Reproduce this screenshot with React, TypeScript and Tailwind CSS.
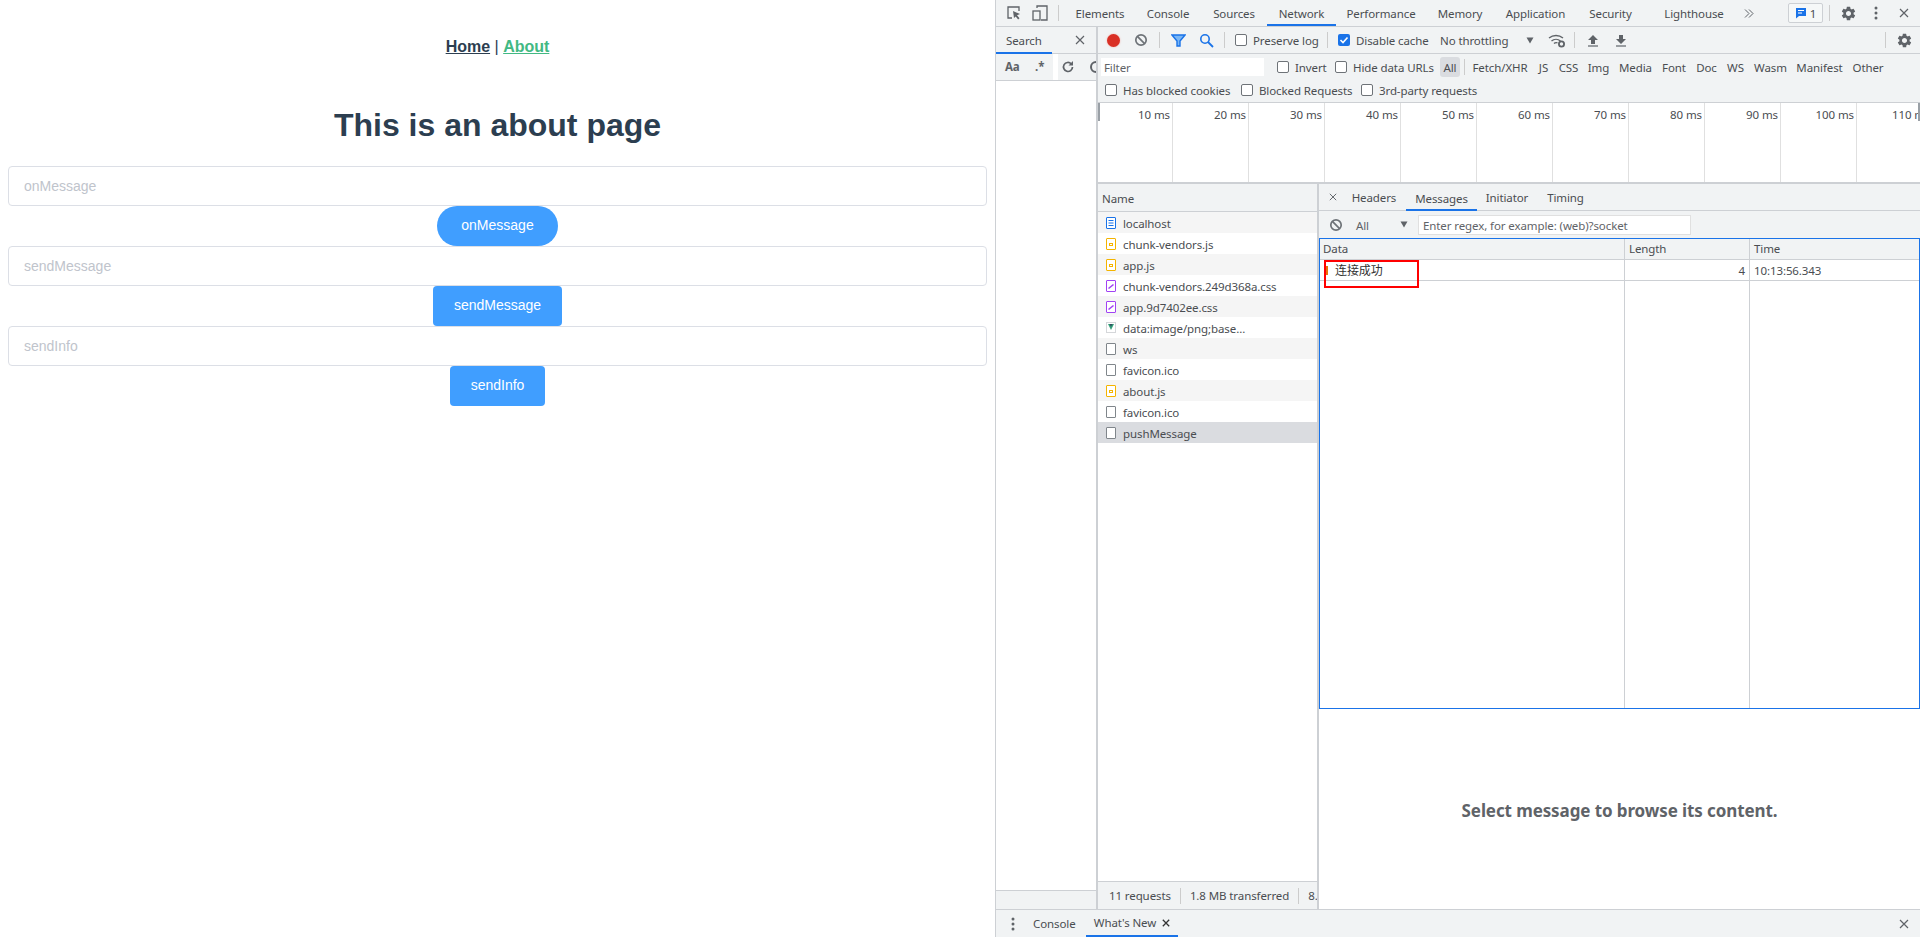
import { MdSettings } from "react-icons/md";

const mainTabs = [
  { label: "Elements", w: "w-[70px]" },
  { label: "Console", w: "w-[66px]" },
  { label: "Sources", w: "w-[66px]" },
  { label: "Network", w: "w-[69px]" },
  { label: "Performance", w: "w-[90px]" },
  { label: "Memory", w: "w-[68px]" },
  { label: "Application", w: "w-[83px]" },
  { label: "Security", w: "w-[67px]" },
  { label: "Lighthouse", w: "w-[100px]" },
];

const typeFilters = [
  { label: "Fetch/XHR", w: "w-[66px]" },
  { label: "JS", w: "w-[21px]" },
  { label: "CSS", w: "w-[29px]" },
  { label: "Img", w: "w-[31px]" },
  { label: "Media", w: "w-[43px]" },
  { label: "Font", w: "w-[34px]" },
  { label: "Doc", w: "w-[31px]" },
  { label: "WS", w: "w-[27px]" },
  { label: "Wasm", w: "w-[43px]" },
  { label: "Manifest", w: "w-[55px]" },
  { label: "Other", w: "w-[42px]" },
];

const detailTabs = [
  { label: "Headers", w: "w-[64px] pt-[2px]" },
  { label: "Messages", w: "w-[71px] pt-[4px] border-b-2 border-[#1a73e8] mb-[-1px]" },
  { label: "Initiator", w: "w-[60px] pt-[2px]" },
  { label: "Timing", w: "w-[57px] pt-[2px]" },
];

const requests = [
  { name: "localhost", kind: "doc" },
  { name: "chunk-vendors.js", kind: "js" },
  { name: "app.js", kind: "js" },
  { name: "chunk-vendors.249d368a.css", kind: "css" },
  { name: "app.9d7402ee.css", kind: "css" },
  { name: "data:image/png;base...", kind: "img" },
  { name: "ws", kind: "blank" },
  { name: "favicon.ico", kind: "blank" },
  { name: "about.js", kind: "js" },
  { name: "favicon.ico", kind: "blank" },
  { name: "pushMessage", kind: "blank" },
];

const ticks = ["10 ms", "20 ms", "30 ms", "40 ms", "50 ms", "60 ms", "70 ms", "80 ms", "90 ms", "100 ms"];

function FileIcon({ kind }: { kind: string }) {
  return (
    <svg width="12" height="14" viewBox="0 0 12 14" className="shrink-0">
      {kind === "doc" && (
        <>
          <rect x="1.5" y="1.5" width="9" height="11" rx="0.5" fill="#fff" stroke="#1a73e8" />
          <path d="M3.5 4.5h5M3.5 7h5M3.5 9.5h5" stroke="#1a73e8" />
        </>
      )}
      {kind === "js" && (
        <>
          <rect x="1.5" y="1.5" width="9" height="11" rx="0.5" fill="#fff" stroke="#f4b400" />
          <rect x="4.5" y="6.5" width="3" height="2" fill="none" stroke="#f4b400" />
        </>
      )}
      {kind === "css" && (
        <>
          <rect x="1.5" y="1.5" width="9" height="11" rx="0.5" fill="#fff" stroke="#a142f4" />
          <path d="M3.5 9.5l5-4" stroke="#a142f4" strokeWidth="1.6" />
        </>
      )}
      {kind === "img" && (
        <>
          <rect x="1.5" y="1.5" width="9" height="10" fill="#fff" stroke="#d5d7da" />
          <path d="M3 3h6L6 9z" fill="#35a07a" />
          <path d="M4.5 3h3L6 5.8z" fill="#2f4f5f" />
        </>
      )}
      {kind === "blank" && <rect x="1.5" y="1.5" width="9" height="11" rx="0.5" fill="#fff" stroke="#80868b" />}
    </svg>
  );
}

function CheckBox({ checked }: { checked?: boolean }) {
  if (checked) {
    return (
      <svg width="12" height="12" viewBox="0 0 12 12" className="shrink-0">
        <rect width="12" height="12" rx="2" fill="#1a73e8" />
        <path d="M2.5 6l2.5 2.5 4.5-5" fill="none" stroke="#fff" strokeWidth="1.6" />
      </svg>
    );
  }
  return <span className="w-[12px] h-[12px] shrink-0 rounded-[2px] border border-[#6e7378] bg-white" />;
}

function Divider() {
  return <span className="block w-px h-[16px] bg-[#ccc] shrink-0" />;
}

function BlockIcon() {
  return (
    <svg width="14" height="14" viewBox="0 0 14 14" className="shrink-0 block">
      <circle cx="7" cy="7" r="5.2" fill="none" stroke="#6e7378" strokeWidth="1.7" />
      <path d="M3.4 3.4l7.2 7.2" stroke="#6e7378" strokeWidth="1.7" />
    </svg>
  );
}

function CloseIcon({ size = 10, color = "#5f6368", weight = 1.2 }: { size?: number; color?: string; weight?: number }) {
  return (
    <svg width={size} height={size} viewBox="0 0 10 10" className="shrink-0 block">
      <path d="M1 1l8 8M9 1l-8 8" stroke={color} strokeWidth={weight} />
    </svg>
  );
}

function Kebab() {
  return (
    <svg width="4" height="14" viewBox="0 0 4 14" className="shrink-0 block">
      <circle cx="2" cy="2" r="1.5" fill="#5f6368" />
      <circle cx="2" cy="7" r="1.5" fill="#5f6368" />
      <circle cx="2" cy="12" r="1.5" fill="#5f6368" />
    </svg>
  );
}

function ArrowDown() {
  return (
    <svg width="8" height="7" viewBox="0 0 8 7" className="shrink-0 block">
      <path d="M0.5 0.5h7L4 6.5z" fill="#5f6368" />
    </svg>
  );
}

function TransferIcon({ up }: { up?: boolean }) {
  return (
    <svg width="12" height="13" viewBox="0 0 12 13" className="shrink-0 block">
      <path d={up ? "M6 1l5 5H8v4H4V6H1z" : "M4 1h4v4h3l-5 5-5-5h3z"} fill="#5f6368" />
      <path d="M1 12h10" stroke="#5f6368" strokeWidth="1.2" />
    </svg>
  );
}

function ToolbarCheck({ label, checked }: { label: string; checked?: boolean }) {
  return (
    <span className="flex items-center gap-[6px] whitespace-nowrap">
      <CheckBox checked={checked} />
      <span className="pt-[2px]">{label}</span>
    </span>
  );
}

function AboutPage() {
  const blocks = [
    { name: "onMessage", btn: "rounded-[20px] w-[121px]" },
    { name: "sendMessage", btn: "rounded-[4px] w-[129px]" },
    { name: "sendInfo", btn: "rounded-[4px] w-[95px]" },
  ];
  return (
    <div className="w-[995px] shrink-0 p-2 text-center font-['Liberation_Sans',Arial,sans-serif] text-[#2c3e50]">
      <nav className="p-[30px] text-[16px] leading-[18px]">
        <a className="font-bold underline">Home</a> | <a className="font-bold underline text-[#42b983]">About</a>
      </nav>
      <h1 className="my-[21.44px] text-[32px] leading-[37px] font-bold">This is an about page</h1>
      {blocks.map((b) => (
        <div key={b.name} className="flex flex-col items-center">
          <input
            readOnly
            placeholder={b.name}
            className="w-full h-[40px] px-[15px] text-[14px] rounded-[4px] border border-[#dcdfe6] bg-white outline-none placeholder:text-[#c0c4cc]"
          />
          <button className={`h-[40px] ${b.btn} bg-[#409eff] text-white text-[14px]`}>{b.name}</button>
        </div>
      ))}
    </div>
  );
}

function SearchPane() {
  return (
    <div className="w-[102px] shrink-0 flex flex-col border-r-2 border-[#cdd0d4] bg-white">
      <div className="h-[27px] flex items-center bg-[#f1f3f4] border-b border-[#cdd0d4]">
        <span className="w-[56px] h-full flex items-center pl-[10px] pt-[2px] border-b-2 border-[#1a73e8] mb-[-1px]">Search</span>
        <span className="ml-[23px]">
          <CloseIcon />
        </span>
      </div>
      <div className="h-[27px] flex items-center bg-[#f1f3f4] border-b border-[#cdd0d4] overflow-hidden">
        <span className="ml-[9px] w-[14px] shrink-0 font-bold text-[#5f6368]">Aa</span>
        <span className="ml-[16px] w-[10px] shrink-0 font-bold text-[#5f6368]">.*</span>
        <span className="ml-[8px] w-[5px] h-full bg-white shrink-0" />
        <svg width="14" height="14" viewBox="0 0 14 14" className="ml-[3px] shrink-0">
          <path d="M11.5 7a4.5 4.5 0 1 1-1.3-3.2" fill="none" stroke="#5f6368" strokeWidth="1.7" />
          <path d="M12 1v4.5H7.5z" fill="#5f6368" />
        </svg>
        <span className="ml-[15px] w-[12px] h-[12px] rounded-full border-2 border-[#5f6368] shrink-0" />
      </div>
      <div className="flex-1" />
      <div className="h-[19px] bg-[#f1f3f4] border-t border-[#cdd0d4]" />
    </div>
  );
}

function NetworkToolbar() {
  return (
    <div className="h-[27px] flex items-center border-b border-[#cdd0d4] bg-[#f1f3f4]">
      <span className="ml-[9px] w-[13px] h-[13px] rounded-full bg-[#d93025] shadow-[0_0_2px_#f0a8a2] shrink-0" />
      <span className="ml-[14px]">
        <BlockIcon />
      </span>
      <span className="ml-[11px]">
        <Divider />
      </span>
      <svg width="15" height="13" viewBox="0 0 15 13" className="ml-[11px] shrink-0">
        <path d="M1 1h13L9 7v5H6V7z" fill="#7ab6f5" stroke="#1a73e8" strokeWidth="1.4" />
      </svg>
      <svg width="15" height="15" viewBox="0 0 15 15" className="ml-[13px] shrink-0">
        <circle cx="6" cy="6" r="4.2" fill="none" stroke="#1a73e8" strokeWidth="1.6" />
        <path d="M9 9l5 5" stroke="#1a73e8" strokeWidth="1.8" />
      </svg>
      <span className="ml-[10px]">
        <Divider />
      </span>
      <span className="ml-[10px] w-[92px] shrink-0">
        <ToolbarCheck label="Preserve log" />
      </span>
      <Divider />
      <span className="ml-[10px] w-[102px] shrink-0">
        <ToolbarCheck label="Disable cache" checked />
      </span>
      <span className="whitespace-nowrap w-[86px] shrink-0 pt-[2px]">No throttling</span>
      <ArrowDown />
      <svg width="18" height="15" viewBox="0 0 18 15" className="ml-[14px] shrink-0">
        <path d="M1 5a11 11 0 0 1 14 0M3.5 8a7 7 0 0 1 9 0M6 10.5a3.4 3.4 0 0 1 3.5-.6" fill="none" stroke="#5f6368" strokeWidth="1.4" />
        <circle cx="13.5" cy="11" r="2.6" fill="none" stroke="#5f6368" strokeWidth="1.8" />
      </svg>
      <span className="ml-[8px]">
        <Divider />
      </span>
      <span className="ml-[12px]">
        <TransferIcon up />
      </span>
      <span className="ml-[16px]">
        <TransferIcon />
      </span>
      <span className="ml-auto">
        <Divider />
      </span>
      <MdSettings className="ml-[10px] mr-[7px] text-[#5f6368] text-[17px] shrink-0" />
    </div>
  );
}

function FilterRows() {
  return (
    <div className="bg-[#f1f3f4] border-b border-[#cdd0d4]">
      <div className="h-[26px] flex items-center">
        <span className="ml-[3px] w-[163px] h-[18px] bg-white flex items-center pl-[3px] pt-[2px] text-[#5f6368] shrink-0">Filter</span>
        <span className="ml-[13px] w-[58px] shrink-0">
          <ToolbarCheck label="Invert" />
        </span>
        <span className="w-[105px] shrink-0">
          <ToolbarCheck label="Hide data URLs" />
        </span>
        <span className="w-[20px] h-[20px] shrink-0 rounded-[3px] bg-[#dadce0] text-center leading-[22px]">All</span>
        <span className="ml-[4px] w-px h-[16px] bg-[#ccc] shrink-0" />
        <span className="ml-[2px] flex whitespace-nowrap pt-[2px]">
          {typeFilters.map((t) => (
            <span key={t.label} className={`${t.w} text-center shrink-0`}>
              {t.label}
            </span>
          ))}
        </span>
      </div>
      <div className="h-[22px] flex items-center pl-[7px] pb-[3px]">
        <span className="w-[136px] shrink-0">
          <ToolbarCheck label="Has blocked cookies" />
        </span>
        <span className="w-[120px] shrink-0">
          <ToolbarCheck label="Blocked Requests" />
        </span>
        <ToolbarCheck label="3rd-party requests" />
      </div>
    </div>
  );
}

function Timeline() {
  return (
    <div className="h-[81px] shrink-0 flex bg-white border-b-2 border-[#cdd0d4] overflow-hidden relative">
      <span className="absolute left-0 top-0 w-[2px] h-[18px] bg-[#9aa0a6]" />
      <span className="absolute right-0 top-0 w-[2px] h-[18px] bg-[#9aa0a6]" />
      {ticks.map((t, i) => (
        <div
          key={t}
          className={`${i === 0 ? "w-[75px]" : "w-[76px]"} shrink-0 border-r border-[#e0e0e0] text-right pr-[2px] pt-[3px] whitespace-nowrap`}
        >
          {t}
        </div>
      ))}
      <div className="w-[63px] shrink-0 overflow-hidden whitespace-nowrap pl-[35px] pt-[3px]">110 ms</div>
    </div>
  );
}

function RequestList() {
  return (
    <div className="w-[221px] shrink-0 flex flex-col border-r-2 border-[#cdd0d4] bg-white">
      <div className="h-[28px] flex items-center pl-[4px] pt-[2px] bg-[#f1f3f4] border-b border-[#cdd0d4]">Name</div>
      {requests.map((r, i) => (
        <div
          key={i}
          className={`h-[21px] flex items-center pl-[7px] gap-[6px] whitespace-nowrap ${
            i === 10 ? "bg-[#dadce0]" : i % 2 === 0 ? "bg-[#f5f5f5]" : "bg-white"
          }`}
        >
          <FileIcon kind={r.kind} />
          <span className="pt-[2px]">{r.name}</span>
        </div>
      ))}
      <div className="flex-1" />
      <div className="h-[28px] flex items-center pl-[11px] gap-[9px] bg-[#f1f3f4] border-t border-[#cdd0d4] whitespace-nowrap overflow-hidden">
        <span>11 requests</span>
        <span className="w-px h-[16px] bg-[#ccc] shrink-0" />
        <span>1.8 MB transferred</span>
        <span className="w-px h-[16px] bg-[#ccc] shrink-0" />
        <span>8.</span>
      </div>
    </div>
  );
}

function MessagesPane() {
  return (
    <div className="flex-1 min-w-0 flex flex-col bg-white relative">
      <div className="h-[27px] shrink-0 flex items-center bg-[#f1f3f4] border-b border-[#cdd0d4]">
        <span className="ml-[10px] w-[13px]">
          <CloseIcon size={8} />
        </span>
        {detailTabs.map((t) => (
          <span key={t.label} className={`h-full flex items-center justify-center ${t.w}`}>
            {t.label}
          </span>
        ))}
      </div>
      <div className="h-[27px] shrink-0 flex items-center bg-[#f1f3f4]">
        <span className="ml-[10px]">
          <BlockIcon />
        </span>
        <span className="ml-[13px] w-[44px] pt-[2px] text-[#5f6368]">All</span>
        <ArrowDown />
        <span className="ml-[10px] w-[273px] h-[20px] flex items-center pl-[4px] pt-[2px] bg-white border border-[#e0e0e0] text-[#5f6368] whitespace-nowrap">
          Enter regex, for example: (web)?socket
        </span>
      </div>
      <div className="h-[471px] shrink-0 border border-[#1a73e8] grid grid-cols-[305px_125px_1fr] grid-rows-[21px_21px_1fr]">
        <div className="pl-[3px] bg-[#f1f3f4] border-b border-r border-[#cdd0d4] leading-[20px]">Data</div>
        <div className="pl-[4px] bg-[#f1f3f4] border-b border-r border-[#cdd0d4] leading-[20px]">Length</div>
        <div className="pl-[4px] bg-[#f1f3f4] border-b border-[#cdd0d4] leading-[20px]">Time</div>
        <div className="pl-[6px] flex items-center gap-[7px] border-b border-r border-[#cdd0d4]">
          <span className="w-[2px] h-[9px] bg-[#e8710a] shrink-0" />
          <span className="font-['Noto_Sans_CJK_SC',sans-serif] text-[12px] text-[#333]">连接成功</span>
        </div>
        <div className="pr-[4px] text-right border-b border-r border-[#cdd0d4] leading-[22px]">4</div>
        <div className="pl-[4px] border-b border-[#cdd0d4] leading-[22px]">10:13:56.343</div>
        <div className="border-r border-[#cdd0d4]" />
        <div className="border-r border-[#cdd0d4]" />
        <div />
      </div>
      {/* red box drawn over the first row */}
      <div className="absolute left-[5px] top-[76px] w-[95px] h-[28px] border-2 border-[#f00]" />
      <div className="flex-1 flex items-center justify-center pt-[4px] text-[17px] font-bold text-[#5f6368]">
        Select message to browse its content.
      </div>
    </div>
  );
}

function DevTools() {
  return (
    <div className="flex-1 min-w-0 flex flex-col border-l border-[#cdd0d4] text-[11.5px] tracking-[-0.1px] text-[#4a4d51] font-['Noto_Sans',sans-serif]">
      <div className="h-[26px] shrink-0 flex items-center bg-[#f1f3f4]">
        <svg width="16" height="16" viewBox="0 0 16 16" className="ml-[10px] shrink-0">
          <path d="M6 13H2V2h11v4" fill="none" stroke="#5f6368" strokeWidth="1.3" />
          <path d="M7 6l7 3-3 1.2 2.5 3-1.4 1.2-2.4-3L8 13z" fill="#5f6368" />
        </svg>
        <svg width="16" height="16" viewBox="0 0 16 16" className="ml-[10px] shrink-0">
          <path d="M5 3V1h10v14H9" fill="none" stroke="#5f6368" strokeWidth="1.3" />
          <rect x="1" y="6" width="7" height="9" fill="none" stroke="#5f6368" strokeWidth="1.3" />
        </svg>
        <span className="ml-[10px] mr-[6px] w-px h-[16px] bg-[#ccc] shrink-0" />
        {mainTabs.map((t) => (
          <span
            key={t.label}
            className={`${t.w} h-[26px] flex items-center justify-center whitespace-nowrap shrink-0 ${
              t.label === "Network" ? "border-b-2 border-[#1a73e8] pt-[4px]" : "pt-[2px]"
            }`}
          >
            {t.label}
          </span>
        ))}
        <svg width="10" height="9" viewBox="0 0 10 9" className="shrink-0">
          <path d="M1 0.5l4 4-4 4M5 0.5l4 4-4 4" fill="none" stroke="#5f6368" />
        </svg>
        <span className="ml-[34px] w-[35px] h-[20px] flex items-center justify-center gap-[3px] bg-white/40 border border-[#cdd0d4] rounded-[2px] shrink-0">
          <svg width="12" height="12" viewBox="0 0 12 12">
            <path d="M1 1h10v8H4l-3 2.5z" fill="#1a73e8" />
            <path d="M3 3.5h6M3 6h4" stroke="#fff" />
          </svg>
          <span className="pt-[2px]">1</span>
        </span>
        <span className="ml-[6px] w-px h-[16px] bg-[#ccc] shrink-0" />
        <MdSettings className="ml-[10px] text-[#5f6368] text-[17px] shrink-0" />
        <span className="ml-[17px]">
          <Kebab />
        </span>
        <span className="ml-[21px]">
          <CloseIcon />
        </span>
      </div>
      <div className="flex-1 min-h-0 flex border-t border-[#cdd0d4]">
        <SearchPane />
        <div className="flex-1 min-w-0 flex flex-col">
          <NetworkToolbar />
          <FilterRows />
          <Timeline />
          <div className="flex-1 min-h-0 flex">
            <RequestList />
            <MessagesPane />
          </div>
        </div>
      </div>
      <div className="h-[28px] shrink-0 flex items-center bg-[#f1f3f4] border-t border-[#cdd0d4]">
        <span className="ml-[15px] w-[22px]">
          <Kebab />
        </span>
        <span className="w-[45px]">Console</span>
        <span className="ml-[8px] w-[92px] h-full flex items-center justify-center gap-[6px] border-b-2 border-[#1a73e8] whitespace-nowrap">
          <span>What's New</span>
          <CloseIcon size={8} color="#333" weight={1.6} />
        </span>
        <span className="ml-auto mr-[11px]">
          <CloseIcon />
        </span>
      </div>
    </div>
  );
}

export default function App() {
  return (
    <div className="flex w-[1920px] h-[937px] overflow-hidden bg-white">
      <AboutPage />
      <DevTools />
    </div>
  );
}
